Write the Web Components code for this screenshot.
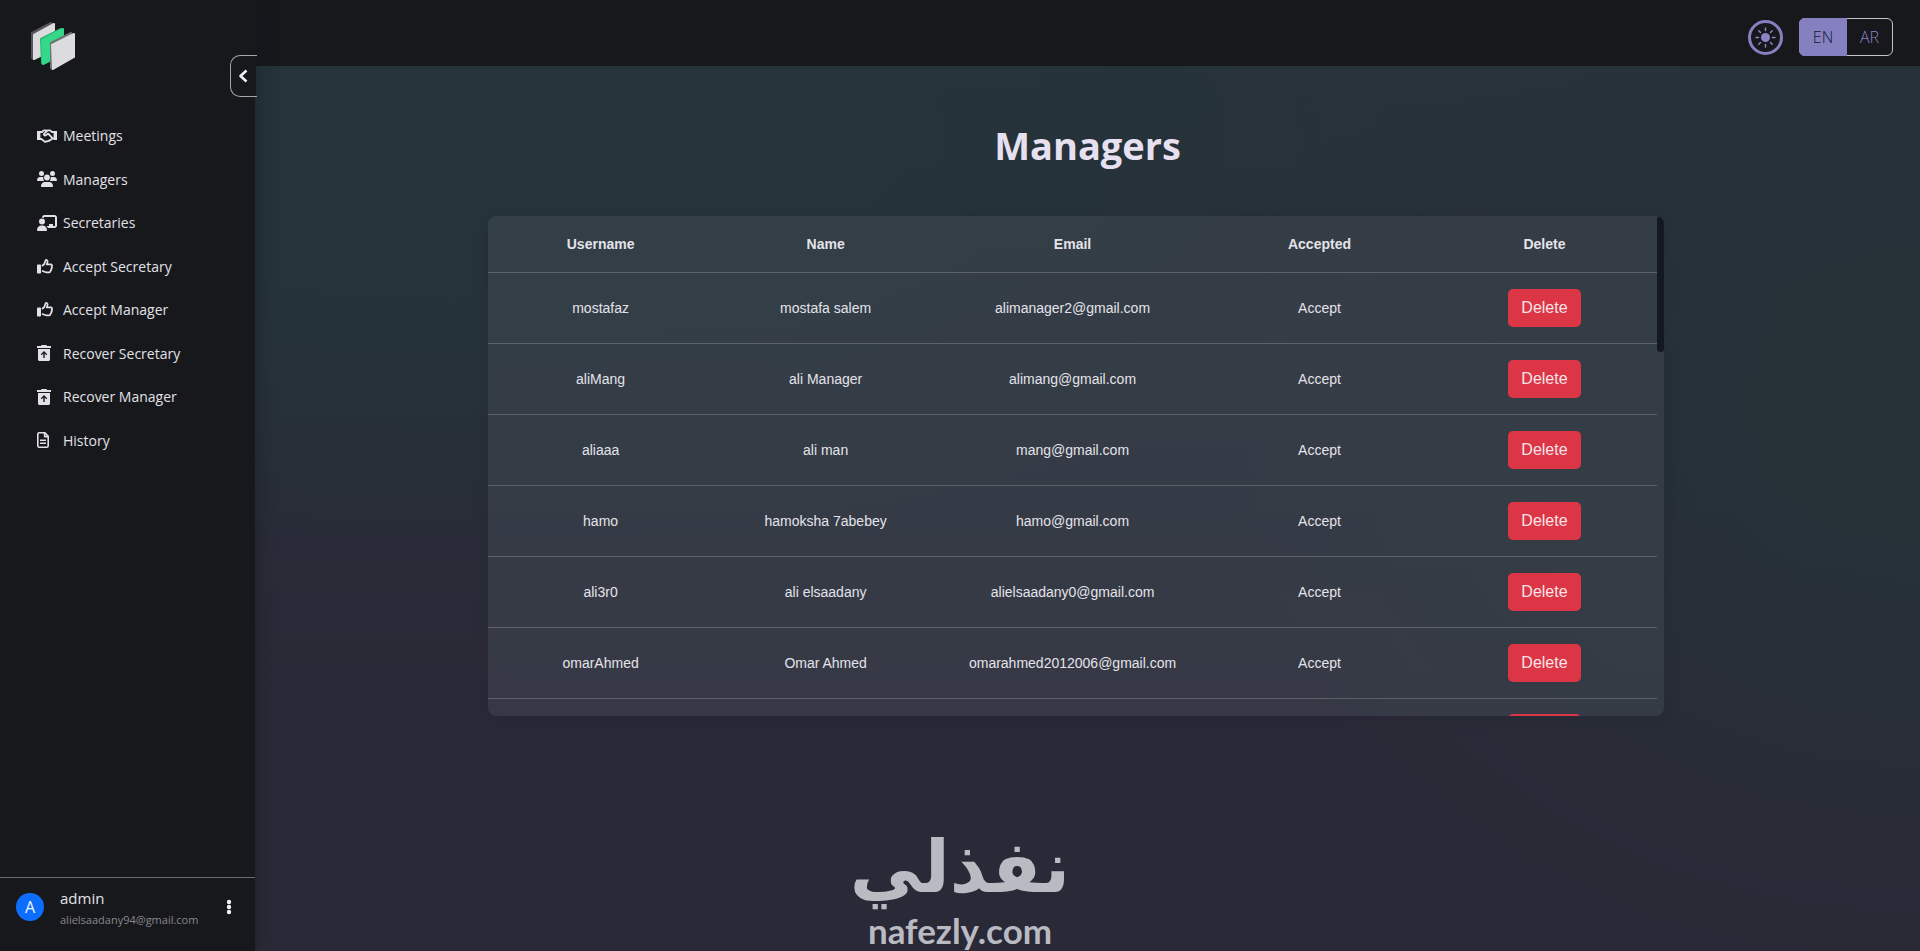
<!DOCTYPE html>
<html lang="en">
<head>
<meta charset="utf-8">
<title>Managers</title>
<style>
  body {
    margin: 0;
    background: #17181c;
    color: #e4e3ea;
    font-family: "Open Sans", "Noto Sans", sans-serif;
  }
</style>
</head>
<body>
<app-shell>
  <side-bar slot="sidebar">
    <nav-item icon="handshake">Meetings</nav-item>
    <nav-item icon="users">Managers</nav-item>
    <nav-item icon="board">Secretaries</nav-item>
    <nav-item icon="thumb">Accept Secretary</nav-item>
    <nav-item icon="thumb">Accept Manager</nav-item>
    <nav-item icon="trash">Recover Secretary</nav-item>
    <nav-item icon="trash">Recover Manager</nav-item>
    <nav-item icon="file">History</nav-item>
    <user-card slot="footer" email="alielsaadany94@gmail.com">admin</user-card>
  </side-bar>
  <top-bar slot="header"></top-bar>
  <h1 slot="title">Managers</h1>
  <managers-table></managers-table>
  <brand-mark slot="brand"></brand-mark>
</app-shell>

<script>
const icons = {
  handshake: `<svg width="20" height="14" viewBox="0 0 20 14" fill="none" stroke="currentColor" stroke-width="1.8" stroke-linejoin="round" stroke-linecap="round">
    <path d="M0 2h3.4v9H0zM16.6 2H20v9h-3.400z" fill="currentColor" stroke="none"/>
    <path d="M3.400 3h1.600l1.800-1.600h2.400L10 2M16.600 3H15l-2-1.600h-2.200L7.200 4.600c-.8 1 .4 2.400 1.600 1.700l2.400-1.700 4 4.200M3.400 10h1l3 2.400c.8.500 1.600.3 2-.2.900.5 1.700.2 2.100-.6.900.3 1.600-.2 1.900-.9.800.1 1.500-.3 1.800-1.100l1.400-.2"/></svg>`,
  users: `<svg width="20" height="16" viewBox="0 0 20 16" fill="currentColor">
    <circle cx="4.500" cy="2.500" r="2.500"/><circle cx="15.500" cy="2.500" r="2.500"/><circle cx="10" cy="6.500" r="2.900"/>
    <path d="M0 9.200C0 7.300 1.300 6 3 6h2.200c.4 0 .8.100 1.200.2C6.100 7.600 6.500 9 7.300 10H.8c-.5 0-.8-.4-.8-.8zM20 9.200C20 7.300 18.700 6 17 6h-2.200c-.4 0-.8.100-1.200.2.300 1.400-.1 2.800-.9 3.800h6.500c.5 0 .8-.4.800-.8zM4 15c0-2.300 1.600-4 3.800-4h4.400c2.200 0 3.800 1.700 3.800 4 0 .6-.4 1-1 1H5c-.6 0-1-.4-1-1z"/></svg>`,
  board: `<svg width="20" height="16" viewBox="0 0 20 16" fill="currentColor">
    <path d="M5 2.500C5 1.100 6.100 0 7.500 0h10C18.900 0 20 1.100 20 2.500v8c0 1.400-1.100 2.500-2.500 2.500H11c-.3-.8-.8-1.500-1.500-2H12V9h4v2h2V2H7v1c-.6-.3-1.300-.5-2-.5z"/>
    <circle cx="5" cy="6.500" r="3"/><path d="M0 15c0-2.300 1.700-4.500 4-4.500h2c2.300 0 4 2.200 4 4.500 0 .6-.4 1-1 1H1c-.6 0-1-.4-1-1z"/></svg>`,
  thumb: `<svg width="16" height="15" viewBox="0 0 16 15">
    <rect y="5.500" width="4" height="9" rx=".8" fill="currentColor"/>
    <path d="M5 7l2.300-2L8.400 1.700C8.700.6 10.700.7 10.600 2.600 10.500 3.600 10 4.600 9.700 5.400h4c1.400 0 1.800 1.500.9 2.200.6.700.4 1.700-.3 2.100.3.800 0 1.500-.7 1.800.1 1-.5 1.800-1.500 1.800H9.500c-1.700 0-2.500-.6-4.500-1.500" fill="none" stroke="currentColor" stroke-width="1.700" stroke-linejoin="round"/></svg>`,
  trash: `<svg width="14" height="16" viewBox="0 0 14 16" fill="currentColor">
    <path fill-rule="evenodd" d="M4.500 0h5l.5 1h4v2H0V1h4zM1 4h12v10.500c0 .8-.7 1.500-1.500 1.500h-9C1.700 16 1 15.300 1 14.500zM7 6L3.800 9.300l.9.900 1.600-1.600V13h1.400V8.600l1.600 1.600.9-.9z"/></svg>`,
  file: `<svg width="12" height="16" viewBox="0 0 12 16" fill="none" stroke="currentColor" stroke-width="1.600" stroke-linejoin="round">
    <path d="M.8 2.200C.8 1.400 1.400.8 2.200.8H8l3.200 3.400v9.600c0 .8-.6 1.400-1.400 1.400H2.200c-.8 0-1.400-.6-1.400-1.400zM7.600 1v3.600H11M3 8.200h6M3 11.300h6"/></svg>`
};

class AppShell extends HTMLElement {
  constructor() {
    super();
    this.attachShadow({ mode: 'open' });
    this.shadowRoot.innerHTML = `
      <style>
        :host {
          display: grid;
          grid-template: auto 1fr / 255px 1fr;
          position: relative;
          height: 100vh;
          overflow: hidden;
        }
        slot[name="sidebar"]::slotted(*) {
          grid-row: 1 / 3;
          z-index: 1;
        }
        main {
          min-width: 0;
          background:
            radial-gradient(ellipse 65% 46% at 12% 8%, #25333a 35%, #25333a00),
            radial-gradient(ellipse 42% 65% at 100% 38%, #263138 20%, #26313800),
            linear-gradient(#28323a, #282d38 45%, #2a2937 70%);
        }
        .content {
          padding: 49px 256px 0 14%;
        }
        ::slotted(h1) {
          margin: 0 0 40px 23px;
          font-size: 38px;
          line-height: 61px;
          font-weight: 700;
          text-align: center;
          color: #e6e0f0;
        }
      </style>
      <slot name="sidebar"></slot>
      <slot name="header"></slot>
      <main>
        <div class="content">
          <slot name="title"></slot>
          <slot></slot>
        </div>
      </main>
      <slot name="brand"></slot>
    `;
  }
}
customElements.define('app-shell', AppShell);

class SideBar extends HTMLElement {
  constructor() {
    super();
    this.attachShadow({ mode: 'open' });
    this.shadowRoot.innerHTML = `
      <style>
        :host {
          display: flex;
          flex-direction: column;
          position: relative;
          background: #17181c;
          box-shadow: 4px 0 16px rgba(20, 20, 28, 0.3);
        }
        .logo {
          display: block;
          padding: 20px 28px 0;
          height: 94px;
        }
        nav {
          display: grid;
          grid-auto-rows: 1fr;
          height: 348px;
          padding-left: 37px;
        }
        #toggle {
          position: absolute;
          top: 55px;
          right: -2px;
          width: 27px;
          height: 42px;
          padding: 0 0 0 2px;
          border: 1px solid #a5a5aa;
          border-right: 0;
          border-radius: 10px 0 0 10px;
          background: linear-gradient(90deg, #17181c 25px, transparent 25px);
          color: #f0f0f4;
        }
        #toggle svg { display: block; margin-left: 5px; }
        .footer { margin-top: auto; }
      </style>
      <a class="logo" href="#" aria-label="Home">
        <svg width="48" height="52" viewBox="28 20 48 52" stroke-linejoin="round" stroke-width="2">
          <path d="M32 33L51 23l2 2-20 34-1-1z" fill="#55565a" stroke="#55565a"/>
          <path d="M34 35L54 24v25L34 59z" fill="#dcdcde" stroke="#dcdcde"/>
          <path d="M41 39L61 29v24L42 63z" fill="#28b070" stroke="#28b070"/>
          <path d="M42 40L63 29v25L43 64z" fill="#34d889" stroke="#34d889"/>
          <path d="M51 43L71 33l-19 36-1-1z" fill="#6d7370" stroke="#6d7370"/>
          <path d="M52 45L74 34v23L53 69z" fill="#dcdcde" stroke="#dcdcde"/>
        </svg>
      </a>
      <button id="toggle" aria-label="Collapse sidebar">
        <svg width="10" height="14" viewBox="0 0 10 14" fill="none" stroke="currentColor" stroke-width="2.600" stroke-linejoin="round"><path d="M8.500 1.500L2.500 7l6 5.500"/></svg>
      </button>
      <nav><slot></slot></nav>
      <div class="footer"><slot name="footer"></slot></div>
    `;
  }
}
customElements.define('side-bar', SideBar);

class NavItem extends HTMLElement {
  constructor() {
    super();
    this.attachShadow({ mode: 'open' });
    this.shadowRoot.innerHTML = `
      <style>
        :host { display: flex; }
        a {
          display: flex;
          align-items: center;
          color: #e2e1e7;
          font-size: 14px;
          text-decoration: none;
          white-space: nowrap;
        }
        .icon { width: 26px; }
        svg { display: block; }
      </style>
      <a href="#"><span class="icon">${icons[this.getAttribute('icon')]}</span><slot></slot></a>
    `;
  }
}
customElements.define('nav-item', NavItem);

class UserCard extends HTMLElement {
  constructor() {
    super();
    this.attachShadow({ mode: 'open' });
    this.shadowRoot.innerHTML = `
      <style>
        :host {
          display: flex;
          align-items: flex-start;
          height: 63px;
          padding: 10px 20px 0 16px;
          border-top: 1px solid #6a6a70;
        }
        .avatar {
          width: 28px;
          margin: 5px 16px 0 0;
          border-radius: 50%;
          background: #0d6efd;
          color: #f0f4ff;
          font-size: 16px;
          line-height: 28px;
          text-align: center;
        }
        .name {
          font-size: 15px;
          line-height: 20px;
          font-weight: 500;
        }
        .email {
          font-size: 11px;
          line-height: 24px;
          color: #87878c;
        }
        button {
          margin: 11px 0 0 auto;
          padding: 0 3px;
          border: 0;
          background: none;
          color: #f0f0f4;
        }
        svg { display: block; }
      </style>
      <div class="avatar">A</div>
      <div>
        <div class="name"><slot></slot></div>
        <div class="email">${this.getAttribute('email')}</div>
      </div>
      <button aria-label="Account menu">
        <svg width="6" height="16" viewBox="0 0 6 16" fill="currentColor"><circle cx="3" cy="3" r="2.200"/><circle cx="3" cy="8" r="2.200"/><circle cx="3" cy="13" r="2.200"/></svg>
      </button>
    `;
  }
}
customElements.define('user-card', UserCard);

class TopBar extends HTMLElement {
  constructor() {
    super();
    this.attachShadow({ mode: 'open' });
    this.shadowRoot.innerHTML = `
      <style>
        :host {
          display: flex;
          justify-content: flex-end;
          align-items: center;
          gap: 16px;
          height: 66px;
          box-sizing: border-box;
          padding: 8px 27px 0 0;
          background: #17181c;
        }
        button {
          border: 0;
          padding: 0;
          background: none;
          color: #8a84c6;
          font: 300 16px "Open Sans", sans-serif;
        }
        .theme {
          width: 35px;
          height: 35px;
          border: 3px solid #8580c0;
          border-radius: 50%;
        }
        .theme svg { display: block; margin: auto; }
        .lang {
          display: flex;
          height: 38px;
          box-sizing: border-box;
          border: 1px solid #c4c4ca;
          border-radius: 6px;
        }
        .lang button { width: 45px; }
        .lang .active {
          width: 48px;
          margin: -1px 0 -1px -1px;
          border-radius: 6px 0 0 6px;
          background: #8580c0;
          color: #17182c;
        }
      </style>
      <button class="theme" aria-label="Switch theme">
        <svg width="21" height="21" viewBox="0 0 21 21" fill="currentColor" stroke="currentColor" stroke-width="1.500" stroke-linecap="round">
          <circle cx="10.500" cy="10.500" r="4.500" stroke="none"/>
          <path d="M10.500 1v2.500M10.500 17.500V20M1 10.500h2.500M17.500 10.500H20M3.800 3.800l1.700 1.700M15.500 15.500l1.700 1.700M3.800 17.200l1.700-1.700M15.500 5.500l1.700-1.700"/>
        </svg>
      </button>
      <div class="lang">
        <button class="active">EN</button>
        <button>AR</button>
      </div>
    `;
  }
}
customElements.define('top-bar', TopBar);

const managers = [
  ['mostafaz', 'mostafa salem', 'alimanager2@gmail.com', 'Accept'],
  ['aliMang', 'ali Manager', 'alimang@gmail.com', 'Accept'],
  ['aliaaa', 'ali man', 'mang@gmail.com', 'Accept'],
  ['hamo', 'hamoksha 7abebey', 'hamo@gmail.com', 'Accept'],
  ['ali3r0', 'ali elsaadany', 'alielsaadany0@gmail.com', 'Accept'],
  ['omarAhmed', 'Omar Ahmed', 'omarahmed2012006@gmail.com', 'Accept'],
  ['', '', '', '']
];

class ManagersTable extends HTMLElement {
  constructor() {
    super();
    this.attachShadow({ mode: 'open' });
    const rows = managers.map(m => `
      <tr>${m.map(text => `<td>${text}</td>`).join('')}<td><button aria-label="Delete ${m[0]}"></button></td></tr>`).join('');
    this.shadowRoot.innerHTML = `
      <style>
        :host {
          display: flex;
          align-items: flex-start;
          height: 500px;
          overflow: hidden;
          border-radius: 8px;
          background: rgba(66, 73, 84, 0.5);
          box-shadow: 0 4px 12px rgba(30, 30, 44, 0.15);
        }
        .rows {
          flex: 1;
          min-width: 0;
        }
        table {
          width: 100%;
          table-layout: fixed;
          border-collapse: collapse;
          font: 14px "Liberation Sans", Arial, sans-serif;
          color: #e4e3ea;
        }
        th, td {
          padding: 0;
          border-bottom: 1px solid #5d616a;
          text-align: center;
        }
        th { height: 56px; font-weight: 700; }
        td { height: 70px; }
        .wide { width: 23%; }
        button {
          width: 73px;
          height: 38px;
          padding: 0;
          border: 0;
          border-radius: 5px;
          background: #dc3545;
          color: #f8e4e8;
          font: 16px "Liberation Sans", Arial, sans-serif;
        }
        .thumb {
          width: 7px;
          height: 136px;
          border-radius: 4px;
          background: #141820;
        }
      </style>
      <div class="rows">
        <table>
          <thead>
            <tr><th>Username</th><th>Name</th><th class="wide">Email</th><th>Accepted</th><th>Delete</th></tr>
          </thead>
          <tbody>${rows}</tbody>
        </table>
      </div>
      <div class="thumb"></div>
    `;
    this.shadowRoot.querySelectorAll('button').forEach((button, i) => {
      if (managers[i][0]) button.textContent = 'Delete';
    });
  }
}
customElements.define('managers-table', ManagersTable);

class BrandMark extends HTMLElement {
  constructor() {
    super();
    this.attachShadow({ mode: 'open' });
    this.shadowRoot.innerHTML = `
      <style>
        :host {
          position: absolute;
          left: 0;
          right: 0;
          bottom: 0;
          z-index: 2;
          display: flex;
          flex-direction: column;
          align-items: center;
          color: #b9bac2;
          pointer-events: none;
        }
        .arabic {
          font: 700 72px/84px "DejaVu Sans", sans-serif;
        }
        .latin {
          font: 700 35px/42px Lato, sans-serif;
        }
      </style>
      <div class="arabic" lang="ar" dir="rtl">نفذلي</div>
      <div class="latin">nafezly.com</div>
    `;
  }
}
customElements.define('brand-mark', BrandMark);
</script>
</body>
</html>
